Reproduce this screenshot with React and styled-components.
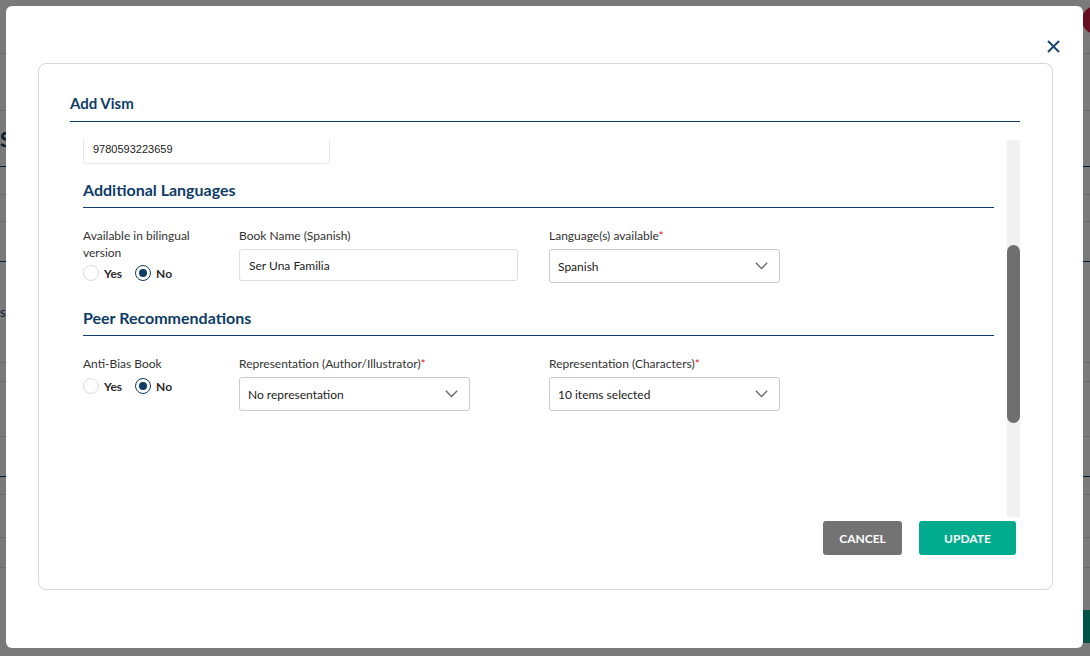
import { useLayoutEffect, useRef, useState } from "react";
import styled, { createGlobalStyle } from "styled-components";

const GlobalStyle = createGlobalStyle`
  html, body {
    margin: 0;
    height: 100%;
    overflow: hidden;
  }
  body {
    font-family: Lato, "Noto Sans", sans-serif;
    background: #ffffff;
  }
`;

/* page that sits behind the dialog */
const Page = styled.div`
  width: 1130px;
  display: flex;
  flex-direction: column;
`;

const TopBar = styled.div`
  height: 54px;
  border-bottom: 1px solid #dddddd;
  display: flex;
  justify-content: flex-end;
  align-items: flex-start;
  padding: 6px 20px 0 0;
  box-sizing: border-box;
`;

const Avatar = styled.div`
  width: 28px;
  height: 28px;
  border-radius: 50%;
  background: #d81e4a;
`;

const PageRow = styled.div`
  height: ${(p) => p.h}px;
  border-bottom: 1px solid ${(p) => (p.accent ? "#0e3c66" : "#dddddd")};
  box-sizing: border-box;
  display: flex;
  align-items: center;
  font-size: ${(p) => (p.big ? "20px" : "13px")};
  font-weight: ${(p) => (p.big ? 700 : 400)};
  color: #0e3c66;
`;

const PageButton = styled.div`
  margin: 42px 0 0 auto;
  width: 90px;
  height: 33px;
  background: #00ab8e;
  border-radius: 3px;
`;

/* dialog */
const Overlay = styled.div`
  position: fixed;
  inset: 0;
  background: rgba(0, 0, 0, 0.52);
  padding: 6px 7px 8px 6px;
  display: flex;
`;

const Modal = styled.div`
  flex: 1;
  background: #ffffff;
  border-radius: 6px;
  display: flex;
  flex-direction: column;
  padding: 0 30px 58px 32px;
`;

const ModalHeader = styled.div`
  height: 57px;
  display: flex;
  justify-content: flex-end;
  align-items: flex-end;
  margin-right: -8px;
`;

const CloseButton = styled.button`
  border: none;
  background: none;
  padding: 0;
  width: 16px;
  height: 16px;
  margin-bottom: 9px;
  display: flex;
  align-items: center;
  justify-content: center;
  color: #1a4773;
  cursor: pointer;
`;

const Card = styled.div`
  flex: 1;
  border: 1px solid #d6d6d6;
  border-radius: 8px;
  padding: 29px 32px 34px 31px;
  display: flex;
  flex-direction: column;
`;

const Title = styled.h2`
  margin: 0 0 18px;
  font-size: 15px;
  line-height: 20px;
  font-weight: 700;
  color: #0e3c66;
  padding-bottom: 8px;
  border-bottom: 1px solid #0e3c66;
`;

const ScrollArea = styled.div`
  height: 377px;
  display: flex;
`;

const Scroller = styled.div`
  position: relative;
  flex: 1;
  overflow-y: scroll;
  scrollbar-width: none;
  &::-webkit-scrollbar {
    display: none;
  }
`;

const Track = styled.div`
  width: 13px;
  background: #f1f1f1;
  display: flex;
  flex-direction: column;
`;

const Thumb = styled.div`
  background: #6f6f6f;
  border-radius: 7px;
`;

const Content = styled.div`
  padding: 0 13px;
`;

const Section = styled.div`
  margin-top: 16px;
`;

const SectionTitle = styled.h3`
  margin: 0 0 19px;
  font-size: 16px;
  line-height: 20px;
  font-weight: 700;
  color: #0e3c66;
  padding-bottom: 7px;
  border-bottom: 1px solid #0e3c66;
`;

const FieldRow = styled.div`
  display: grid;
  grid-template-columns: 156px 310px 1fr;
  align-items: start;
  padding-bottom: 9px;
`;

const Field = styled.div`
  display: flex;
  flex-direction: column;
  gap: ${(p) => p.gap ?? 5}px;
`;

const Label = styled.div`
  font-size: 12px;
  line-height: 17px;
  color: #333333;
  max-width: ${(p) => (p.wide ? "none" : "130px")};
`;

const Required = styled.span`
  color: #e3161b;
`;

const TextInput = styled.input`
  box-sizing: border-box;
  height: ${(p) => p.h ?? 32}px;
  width: ${(p) => p.w}px;
  border: 1px solid ${(p) => (p.faint ? "#e4e6e8" : "#dcdfe3")};
  border-radius: 3px;
  padding: 0 9px;
  font-family: ${(p) =>
    p.mono ? '"Liberation Sans", Arial, sans-serif' : 'Lato, "Noto Sans", sans-serif'};
  font-size: ${(p) => (p.mono ? 11 : 12)}px;
  color: #222222;
  outline: none;
`;

const SelectBox = styled.div`
  box-sizing: border-box;
  height: 34px;
  width: 231px;
  border: 1px solid #c9cdd1;
  border-radius: 3px;
  padding: 0 11px 0 8px;
  display: flex;
  align-items: center;
  justify-content: space-between;
  font-size: 12px;
  color: #222222;
`;

const RadioGroup = styled.div`
  display: flex;
  align-items: center;
  gap: 13px;
`;

const RadioOption = styled.label`
  display: flex;
  align-items: center;
  gap: 5px;
  font-size: 12px;
  font-weight: 700;
  color: #2b2b2b;
`;

const RadioDot = styled.span`
  box-sizing: border-box;
  width: 16px;
  height: 16px;
  border-radius: 50%;
  border: ${(p) => (p.checked ? "1.5px solid #0e3c66" : "1px solid #d9dde1")};
  display: flex;
  align-items: center;
  justify-content: center;
  &::after {
    content: "";
    width: 8px;
    height: 8px;
    border-radius: 50%;
    background: ${(p) => (p.checked ? "#0e3c66" : "transparent")};
  }
`;

const Footer = styled.div`
  margin-top: 4px;
  display: flex;
  justify-content: flex-end;
  gap: 17px;
  padding-right: 4px;
`;

const Button = styled.button`
  height: 34px;
  width: ${(p) => p.w}px;
  border: none;
  border-radius: 3px;
  background: ${(p) => (p.primary ? "#00ab8e" : "#737373")};
  color: #ffffff;
  font-family: Lato, "Noto Sans", sans-serif;
  font-size: 12px;
  font-weight: 700;
  text-transform: uppercase;
  cursor: pointer;
`;

function Chevron() {
  return (
    <svg width="13" height="8" viewBox="0 0 13 8" fill="none">
      <path d="M0.8 0.8 L6.5 6.6 L12.2 0.8" stroke="#6b6b6b" strokeWidth="1.4" />
    </svg>
  );
}

function Select({ value }) {
  return (
    <SelectBox>
      <span>{value}</span>
      <Chevron />
    </SelectBox>
  );
}

function YesNo({ value }) {
  return (
    <RadioGroup>
      <RadioOption>
        <RadioDot checked={value === "yes"} />
        Yes
      </RadioOption>
      <RadioOption>
        <RadioDot checked={value === "no"} />
        No
      </RadioOption>
    </RadioGroup>
  );
}

const pageRows = [
  { h: 57 },
  { h: 56, accent: true, big: true, text: "Site Books" },
  { h: 28 },
  { h: 27 },
  { h: 40, accent: true },
  { h: 101, text: "s" },
  { h: 19 },
  { h: 55 },
  { h: 40, accent: true },
  { h: 18 },
  { h: 43 },
  { h: 30 },
];

// height of the form below the visible window, so the thumb keeps its size
const BELOW_FOLD = 576;
// top margin of the first section, which collapses out of the content box
const LEAD = 16;

export default function App() {
  const scrollRef = useRef(null);
  const contentRef = useRef(null);
  const isbnRef = useRef(null);
  const [thumb, setThumb] = useState({ top: 0, height: 0 });

  // open the form scrolled down to the language section
  useLayoutEffect(() => {
    const scroller = scrollRef.current;
    const input = isbnRef.current;
    const top = input.offsetTop + input.offsetHeight - 24;
    contentRef.current.style.minHeight = `${top + BELOW_FOLD - LEAD}px`;
    scroller.scrollTop = top;
    const track = scroller.clientHeight;
    const total = scroller.scrollHeight;
    setThumb({
      top: (scroller.scrollTop / total) * track,
      height: (track / total) * track,
    });
  }, []);

  return (
    <>
      <GlobalStyle />
      <Page>
        <TopBar>
          <Avatar />
        </TopBar>
        {pageRows.map((row, idx) => (
          <PageRow key={idx} h={row.h} accent={row.accent} big={row.big}>
            {row.text}
          </PageRow>
        ))}
        <PageButton />
      </Page>

      <Overlay>
        <Modal>
          <ModalHeader>
            <CloseButton aria-label="Close">
              <svg width="13" height="13" viewBox="0 0 13 13">
                <path d="M1 1 L12 12 M12 1 L1 12" stroke="currentColor" strokeWidth="2" />
              </svg>
            </CloseButton>
          </ModalHeader>
          <Card>
            <Title>Add Vism</Title>
            <ScrollArea>
              <Scroller ref={scrollRef}>
                <Content ref={contentRef}>
                  <Section>
                    <SectionTitle>Book Details</SectionTitle>
                    <FieldRow>
                      <Field>
                        <Label>Author</Label>
                        <TextInput w={140} defaultValue="Gabriela Mistral" readOnly />
                      </Field>
                      <Field>
                        <Label wide>Book Name (English)</Label>
                        <TextInput w={279} defaultValue="Be A Family" readOnly />
                      </Field>
                      <Field>
                        <Label wide>Publisher</Label>
                        <TextInput w={231} defaultValue="Scholastic" readOnly />
                      </Field>
                    </FieldRow>
                    <FieldRow>
                      <Field>
                        <Label>Illustrator</Label>
                        <TextInput w={140} defaultValue="Carmen Lomas" readOnly />
                      </Field>
                      <Field>
                        <Label wide>Series</Label>
                        <TextInput w={279} defaultValue="Family Stories" readOnly />
                      </Field>
                      <Field>
                        <Label wide>Genre</Label>
                        <TextInput w={231} defaultValue="Picture Book" readOnly />
                      </Field>
                    </FieldRow>
                    <Field gap={9}>
                      <Label>ISBN</Label>
                      <TextInput
                        ref={isbnRef}
                        w={247}
                        h={30}
                        faint
                        mono
                        defaultValue="9780593223659"
                        readOnly
                      />
                    </Field>
                  </Section>

                  <Section>
                    <SectionTitle>Additional Languages</SectionTitle>
                    <FieldRow>
                      <Field gap={4}>
                        <Label>Available in bilingual version</Label>
                        <YesNo value="no" />
                      </Field>
                      <Field>
                        <Label wide>Book Name (Spanish)</Label>
                        <TextInput w={279} defaultValue="Ser Una Familia" readOnly />
                      </Field>
                      <Field>
                        <Label wide>
                          Language(s) available<Required>*</Required>
                        </Label>
                        <Select value="Spanish" />
                      </Field>
                    </FieldRow>
                  </Section>

                  <Section>
                    <SectionTitle>Peer Recommendations</SectionTitle>
                    <FieldRow>
                      <Field gap={6}>
                        <Label>Anti-Bias Book</Label>
                        <YesNo value="no" />
                      </Field>
                      <Field>
                        <Label wide>
                          Representation (Author/Illustrator)<Required>*</Required>
                        </Label>
                        <Select value="No representation" />
                      </Field>
                      <Field>
                        <Label wide>
                          Representation (Characters)<Required>*</Required>
                        </Label>
                        <Select value="10 items selected" />
                      </Field>
                    </FieldRow>
                  </Section>
                </Content>
              </Scroller>
              <Track>
                <Thumb style={{ marginTop: thumb.top, height: thumb.height }} />
              </Track>
            </ScrollArea>
            <Footer>
              <Button w={79}>Cancel</Button>
              <Button w={97} primary>
                Update
              </Button>
            </Footer>
          </Card>
        </Modal>
      </Overlay>
    </>
  );
}
